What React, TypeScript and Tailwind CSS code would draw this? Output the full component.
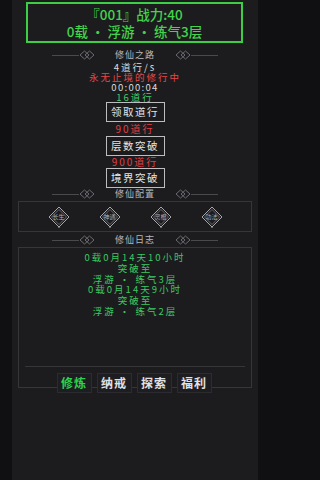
const font = { fontFamily: '"Noto Sans CJK SC", "Noto Sans", sans-serif' };

function Ornament({ flip = false }: { flip?: boolean }) {
  return (
    <svg width="16" height="10" viewBox="0 0 16 10" className={flip ? "scale-x-[-1]" : ""}>
      <path d="M1 5 L5.5 1 L10 5 L5.5 9 Z" fill="none" stroke="#6b6b70" strokeWidth="1" />
      <path d="M6 5 L10.5 1 L15 5 L10.5 9 Z" fill="none" stroke="#6b6b70" strokeWidth="1" />
    </svg>
  );
}

function Divider({ label }: { label: string }) {
  return (
    <div className="h-[12px] flex items-center justify-center">
      <div className="w-[27px] h-px bg-[#4a4a4e]" />
      <Ornament />
      <span className="w-[80px] text-center text-[9px] leading-[12px] tracking-[1px] text-[#b8b8bc]">{label}</span>
      <Ornament flip />
      <div className="w-[27px] h-px bg-[#4a4a4e]" />
    </div>
  );
}

function ActionButton({ label }: { label: string }) {
  return (
    <div className="mx-auto w-[59px] h-[20px] border border-[#bdbdc0] flex items-center justify-center text-[10.5px] leading-[12px] tracking-[1.5px] text-[#e4e4e6]">
      {label}
    </div>
  );
}

function Rune({ label }: { label: string }) {
  return (
    <div className="relative w-[22px] h-[22px] flex items-center justify-center">
      <svg width="22" height="22" viewBox="0 0 22 22" className="absolute inset-0">
        <path d="M11 1 L21 11 L11 21 L1 11 Z" fill="none" stroke="#a8a8ac" strokeWidth="1" />
        <path d="M11 3.5 L18.5 11 L11 18.5 L3.5 11 Z" fill="none" stroke="#7a7a7e" strokeWidth="0.8" />
        <circle cx="11" cy="22" r="0.9" fill="#8a8a8e" />
      </svg>
      <span className="relative text-[6px] leading-[6px] text-[#b0b0b4]">{label}</span>
    </div>
  );
}

const logLines = [
  "0载0月14天10小时",
  "突破至",
  "浮游 · 练气3层",
  "0载0月14天9小时",
  "突破至",
  "浮游 · 练气2层",
];

const tabs = ["修炼", "纳戒", "探索", "福利"];

export default function App() {
  return (
    <div className="min-h-screen w-full bg-[#101012]" style={font}>
      <div className="w-[270px] h-[480px] flex justify-center overflow-hidden">
        <div className="w-[246px] h-full bg-[#1c1c1f] flex flex-col">
          {/* status */}
          <div className="mt-[2px] ml-[14px] w-[217px] h-[41px] border-2 border-[#3ccf45] flex flex-col items-center justify-center text-[#43d34c] text-[13.5px] leading-[17px] font-medium">
            <div>『001』战力:40</div>
            <div>0载 · 浮游 · 练气3层</div>
          </div>

          <div className="mt-[6px]">
            <Divider label="修仙之路" />
          </div>

          <div className="mt-[1px] text-center text-[9.5px] leading-[10px] tracking-[2px]">
            <div className="h-[10px] text-[#dcdcde]">4道行/s</div>
            <div className="h-[10px] text-[#e64848]">永无止境的修行中</div>
            <div className="h-[10px] text-[#dcdcde] tracking-[1.3px]">00:00:04</div>
            <div className="h-[10px] text-[#3ecf6a]">16道行</div>
          </div>

          <ActionButton label="领取道行" />
          <div className="h-[14px] text-center text-[10px] leading-[14px] tracking-[2px] text-[#e23e42]">90道行</div>
          <ActionButton label="层数突破" />
          <div className="h-[11px] text-center text-[10px] leading-[11px] tracking-[2px] text-[#e23e42]">900道行</div>
          <div className="h-px" />
          <ActionButton label="境界突破" />

          <Divider label="修仙配置" />

          {/* config */}
          <div className="mt-[1px] mx-[6px] h-[31px] border border-[#36363a] flex items-center justify-around px-[14px]">
            <Rune label="长生" />
            <Rune label="神通" />
            <Rune label="灵根" />
            <Rune label="功法" />
          </div>

          <div className="mt-[2px]">
            <Divider label="修仙日志" />
          </div>

          {/* log */}
          <div className="mt-[1px] mx-[6px] h-[141px] border border-[#36363a] flex flex-col">
            <div className="flex-1 pt-[4px] text-center text-[9.5px] leading-[10.8px] tracking-[2px] text-[#3cc863]">
              {logLines.map((l, i) => (
                <div key={i} className="h-[10.8px]">{l}</div>
              ))}
            </div>
            <div className="mx-[6px] h-px bg-[#36363a] mb-[20px]" />
          </div>

          <div className="-mt-[15px] flex justify-center gap-[5px] pr-[2px]">
            {tabs.map((t, i) => (
              <div
                key={t}
                className={`w-[35px] h-[20px] border border-[#2c2c30] bg-[#1e1e22] flex items-center justify-center text-[12px] font-bold tracking-[1px] ${
                  i === 0 ? "text-[#2fd24e]" : "text-[#e2e2e4]"
                }`}
              >
                {t}
              </div>
            ))}
          </div>
        </div>
      </div>
    </div>
  );
}
